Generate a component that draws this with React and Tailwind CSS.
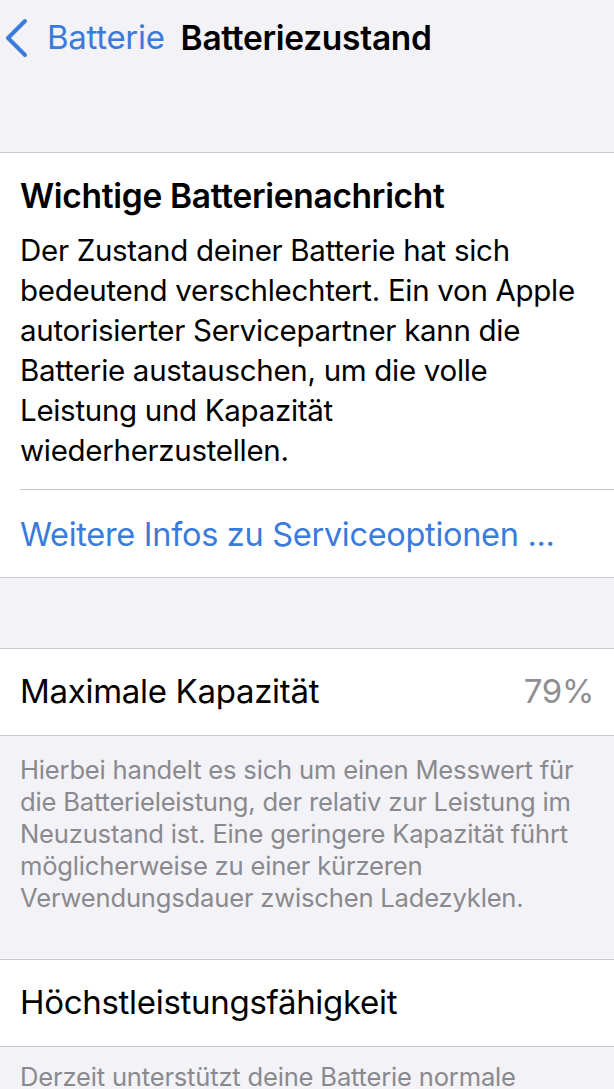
import React from 'react';

const font = { fontFamily: 'Inter, "Noto Sans", sans-serif' };

const App = () => {
  return (
    <div className="min-h-screen bg-[#f2f2f7] text-black" style={font}>
      {/* navigation bar */}
      <div className="h-[76px] flex items-center">
        <div className="flex items-center text-[#3a7bdc]">
          <svg width="28" height="40" viewBox="0 0 28 40" className="ml-[2px]">
            <path d="M23 3 L6 20 L23 37" fill="none" stroke="currentColor" strokeWidth="4" strokeLinecap="round" strokeLinejoin="round" />
          </svg>
          <span className="ml-[17px] text-[33px] tracking-[-0.3px]">Batterie</span>
        </div>
        <span className="ml-[16px] text-[33.5px] font-semibold tracking-[-0.3px]">Batteriezustand</span>
      </div>
      <div className="h-[76px]" />

      {/* message */}
      <div className="bg-white border-y border-[#c8c7cc]">
        <div className="px-5 pt-[23px] pb-[19px]">
          <h2 className="text-[33.5px] leading-[40px] font-semibold tracking-[-0.3px]">Wichtige Batterienachricht</h2>
          <p className="mt-[14px] text-[29.5px] leading-[40px] tracking-[-0.3px]">
            Der Zustand deiner Batterie hat sich bedeutend verschlechtert. Ein von Apple autorisierter Servicepartner kann die Batterie austauschen, um die volle Leistung und Kapazität wiederherzustellen.
          </p>
        </div>
        <div className="ml-5 border-t border-[#c8c7cc]" />
        <div className="h-[87px] flex items-center px-5 pt-[4px] text-[32.5px] tracking-[-0.3px] text-[#3a7bdc]">
          Weitere Infos zu Serviceoptionen ...
        </div>
      </div>

      <div className="h-[70px]" />

      {/* capacity */}
      <div className="bg-white border-y border-[#c8c7cc] h-[88px] flex items-center justify-between px-5 text-[33px] tracking-[-0.3px]">
        <span>Maximale Kapazität</span>
        <span className="text-[#8e8e93]">79%</span>
      </div>
      <p className="px-5 pt-[18px] pb-[45px] text-[25.6px] leading-[32px] text-[#8a8a8e] tracking-[-0.2px]">
        Hierbei handelt es sich um einen Messwert für die Batterieleistung, der relativ zur Leistung im Neuzustand ist. Eine geringere Kapazität führt möglicherweise zu einer kürzeren Verwendungsdauer zwischen Ladezyklen.
      </p>

      {/* peak performance */}
      <div className="bg-white border-y border-[#c8c7cc] h-[88px] flex items-center px-5 text-[33px] tracking-[-0.3px]">
        Höchstleistungsfähigkeit
      </div>
      <p className="px-5 pt-[14px] pb-[40px] text-[25.6px] leading-[32px] text-[#8a8a8e] tracking-[-0.2px]">
        Derzeit unterstützt deine Batterie normale Höchstleistung.
      </p>
    </div>
  );
};

export default App;
